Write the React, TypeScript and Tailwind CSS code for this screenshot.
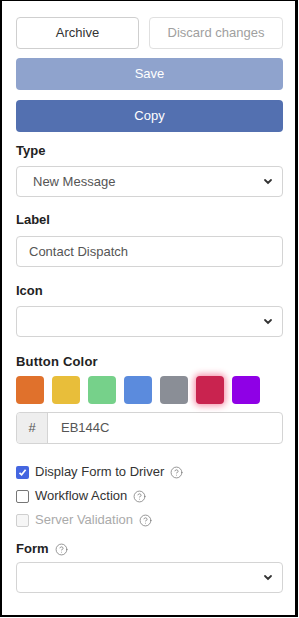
import { CircleHelp } from 'lucide-react';

/**
 * Button editor panel
 * Side form for editing a workflow button
 */

const swatches = ['#E0712C', '#E8BE3A', '#76D18A', '#5B8BDD', '#8A8E96', '#C9234F', '#8F00E6'];
const selectedSwatch = 5;

function Chevron() {
  return (
    <svg width="10" height="7" viewBox="0 0 10 7" className="shrink-0">
      <path d="M2 2 L5 5 L8 2" fill="none" stroke="#333" strokeWidth="1.8" strokeLinecap="round" />
    </svg>
  );
}

function SelectBox({ value }: { value?: string }) {
  return (
    <div className="flex h-[31px] items-center justify-between rounded-[4px] border border-[#d4d4d4] bg-white pl-[16px] pr-[9px]">
      <span className="text-[13px] text-[#555]">{value}</span>
      <Chevron />
    </div>
  );
}

function Help() {
  return <CircleHelp size={13} strokeWidth={1.4} color="#777" />;
}

export default function App() {
  return (
    <div className="h-[618px] w-[299px] bg-white" style={{ fontFamily: '"Liberation Sans", Arial, sans-serif' }}>
      <div className="h-[617px] w-[298px] border-b-2 border-l-2 border-r-[3px] border-t border-black pl-[14px] pt-[16px]">
        <div className="w-[267px]">
          {/* Actions */}
          <div className="flex gap-[10px]">
            <button className="h-[32px] w-[123px] rounded-[4px] border border-[#cfcfcf] bg-white text-[13px] text-[#333]">
              Archive
            </button>
            <button className="h-[32px] flex-1 rounded-[4px] border border-[#e0e0e0] bg-white text-[13px] text-[#a0a0a0]">
              Discard changes
            </button>
          </div>
          <button className="mt-[9px] block h-[32px] w-full rounded-[4px] bg-[#8FA3CD] text-[13px] text-white">
            Save
          </button>
          <button className="mt-[10px] block h-[32px] w-full rounded-[4px] bg-[#5370B0] text-[13px] text-white">
            Copy
          </button>

          {/* Type */}
          <div className="mt-[10px] h-[18px] text-[13px] font-bold leading-[18px] text-[#222]">Type</div>
          <div className="mt-[6px]">
            <SelectBox value="New Message" />
          </div>

          {/* Label */}
          <div className="mt-[14px] h-[18px] text-[13px] font-bold leading-[18px] text-[#222]">Label</div>
          <div className="mt-[7px] flex h-[31px] items-center rounded-[4px] border border-[#d4d4d4] pl-[12px] text-[13px] text-[#555]">
            Contact Dispatch
          </div>

          {/* Icon */}
          <div className="mt-[15px] h-[18px] text-[13px] font-bold leading-[18px] text-[#222]">Icon</div>
          <div className="mt-[6px]">
            <SelectBox />
          </div>

          {/* Button color */}
          <div className="mt-[16px] h-[18px] text-[13px] font-bold leading-[18px] tracking-[0.2px] text-[#222]">
            Button Color
          </div>
          <div className="mt-[5px] flex gap-[8px]">
            {swatches.map((c, i) => (
              <div
                key={c}
                className={`h-[28px] w-[28px] rounded-[4px] ${i === selectedSwatch ? 'shadow-[0_0_6px_2px_rgba(235,20,76,0.45)]' : ''}`}
                style={{ backgroundColor: c }}
              />
            ))}
          </div>
          <div className="mt-[8px] flex h-[32px] rounded-[4px] border border-[#d4d4d4]">
            <div className="flex w-[31px] items-center justify-center rounded-l-[4px] border-r border-[#d4d4d4] bg-[#eeeeee] text-[13px] text-[#555]">
              #
            </div>
            <div className="flex items-center pl-[13px] text-[13px] text-[#555]">EB144C</div>
          </div>

          {/* Flags */}
          <div className="mt-[21px] flex flex-col gap-[10px] text-[13px] leading-[14px]">
            <label className="flex items-center gap-[6px]">
              <span className="flex h-[13px] w-[13px] items-center justify-center rounded-[2px] bg-[#4466E0]">
                <svg width="9" height="9" viewBox="0 0 9 9">
                  <path d="M1.5 4.8 L3.6 6.8 L7.6 1.8" fill="none" stroke="white" strokeWidth="1.7" />
                </svg>
              </span>
              <span className="text-[#333]">Display Form to Driver</span>
              <Help />
            </label>
            <label className="flex items-center gap-[6px]">
              <span className="h-[13px] w-[13px] rounded-[2px] border border-[#767676] bg-white" />
              <span className="text-[#333]">Workflow Action</span>
              <Help />
            </label>
            <label className="flex items-center gap-[6px]">
              <span className="h-[13px] w-[13px] rounded-[2px] border border-[#cfcfcf] bg-[#f6f6f6]" />
              <span className="text-[#aaa]">Server Validation</span>
              <Help />
            </label>
          </div>

          {/* Form */}
          <div className="mt-[13px] flex h-[18px] items-center gap-[6px] text-[13px] font-bold leading-[18px] text-[#222]">
            Form <Help />
          </div>
          <div className="mt-[4px]">
            <SelectBox />
          </div>
        </div>
      </div>
    </div>
  );
}
